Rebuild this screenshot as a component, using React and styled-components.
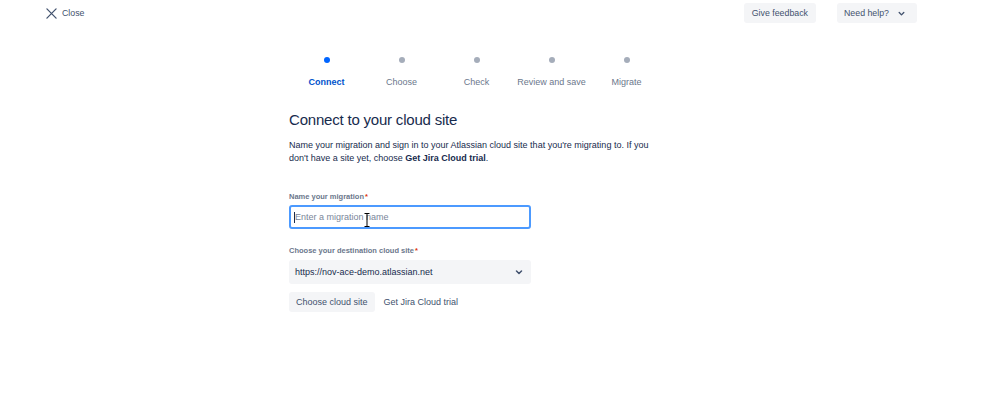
import React from "react";
import styled, { createGlobalStyle } from "styled-components";

const Global = createGlobalStyle`
  html, body { margin: 0; padding: 0; background: #ffffff; }
  body { font-family: "Liberation Sans", Arial, sans-serif; color: #172b4d; }
  * { box-sizing: border-box; }
`;

const Page = styled.div`
  width: 999px;
  height: 395px;
  background: #fff;
  overflow: hidden;
`;

const TopBar = styled.header`
  display: flex;
  align-items: center;
  justify-content: space-between;
  padding: 3px 82px 0 46px;
  height: 23px;
`;

const CloseButton = styled.button`
  display: flex;
  align-items: center;
  gap: 5px;
  border: 0;
  background: none;
  padding: 0;
  font-family: inherit;
  font-size: 8.8px;
  color: #42526e;
  height: 20px;
  cursor: pointer;
`;

const Actions = styled.div`
  display: flex;
  gap: 21px;
`;

const GreyButton = styled.button`
  display: flex;
  align-items: center;
  gap: ${(p) => (p.$gap ? p.$gap : 0)}px;
  height: 20px;
  padding: 0 ${(p) => (p.$pr ? p.$pr : 8)}px 0 ${(p) => (p.$pl ? p.$pl : 8)}px;
  border: 0;
  border-radius: 3px;
  background: #f4f5f7;
  color: #42526e;
  font-family: inherit;
  font-size: 8.8px;
  cursor: pointer;
`;

const Main = styled.main`
  width: 375px;
  margin-left: 289px;
  padding-top: 34px;
`;

const Steps = styled.ol`
  list-style: none;
  margin: 0;
  padding: 0;
  display: grid;
  grid-template-columns: repeat(5, 75px);
`;

const Step = styled.li`
  display: flex;
  flex-direction: column;
  align-items: center;
`;

const Dot = styled.span`
  width: 6px;
  height: 6px;
  border-radius: 50%;
  background: ${(p) => (p.$active ? "#0065ff" : "#a5adba")};
`;

const StepLabel = styled.span`
  margin-top: 14px;
  font-size: 9px;
  line-height: 11px;
  font-weight: ${(p) => (p.$active ? 700 : 400)};
  color: ${(p) => (p.$active ? "#0052cc" : "#6b778c")};
  white-space: nowrap;
`;

const Heading = styled.h1`
  margin: 22px 0 0;
  font-size: 15px;
  line-height: 20px;
  letter-spacing: -0.2px;
  font-weight: 400;
  color: #172b4d;
`;

const Intro = styled.p`
  margin: 9px 0 0;
  font-size: 9px;
  line-height: 13px;
  color: #172b4d;
  b { font-weight: 700; }
`;

const Field = styled.div`
  margin-top: ${(p) => p.$mt}px;
  width: 242px;
`;

const Label = styled.label`
  display: block;
  font-size: 7.5px;
  line-height: 10px;
  font-weight: 700;
  color: #6b778c;
  margin-bottom: ${(p) => (p.$mb != null ? p.$mb : 4)}px;
`;

const Req = styled.span`
  color: #de350b;
  margin-left: 1px;
`;

const InputWrap = styled.div`
  position: relative;
`;

const Input = styled.input`
  display: block;
  width: 100%;
  height: 24px;
  border: 2px solid #4c9aff;
  border-radius: 3px;
  padding: 0 0 0 4px;
  font-family: inherit;
  font-size: 9px;
  color: #172b4d;
  background: #fff;
  outline: none;
  &::placeholder { color: #7a869a; }
`;

const Caret = styled.span`
  position: absolute;
  left: 5px;
  top: 7px;
  width: 1px;
  height: 11px;
  background: #172b4d;
`;

const Pointer = styled.svg`
  position: absolute;
  left: 75px;
  top: 8px;
`;

const Select = styled.div`
  display: flex;
  align-items: center;
  justify-content: space-between;
  height: 24px;
  border-radius: 3px;
  background: #f4f5f7;
  padding: 0 6px 0 6px;
  font-size: 9px;
  color: #172b4d;
`;

const ButtonRow = styled.div`
  display: flex;
  gap: 2px;
  margin-top: 8px;
`;

const Btn = styled.button`
  height: 20px;
  padding: 0 7px;
  border: 0;
  border-radius: 3px;
  background: ${(p) => (p.$subtle ? "transparent" : "#f4f5f7")};
  color: #42526e;
  font-family: inherit;
  font-size: 9px;
  cursor: pointer;
`;

const Chevron = ({ size = 10 }) => (
  <svg width={size} height={size} viewBox="0 0 24 24" fill="none">
    <path d="M7 10l5 5 5-5" stroke="#42526e" strokeWidth="3" strokeLinecap="round" strokeLinejoin="round" />
  </svg>
);

const steps = ["Connect", "Choose", "Check", "Review and save", "Migrate"];

export default function App() {
  return (
    <Page>
      <Global />
      <TopBar>
        <CloseButton>
          <svg width="11" height="11" viewBox="0 0 12 12">
            <path d="M1 1l10 10M11 1L1 11" stroke="#42526e" strokeWidth="1.4" strokeLinecap="round" />
          </svg>
          Close
        </CloseButton>
        <Actions>
          <GreyButton>Give feedback</GreyButton>
          <GreyButton $pl={7} $pr={10} $gap={7}>
            Need help?
            <Chevron size={11} />
          </GreyButton>
        </Actions>
      </TopBar>
      <Main>
        <Steps>
          {steps.map((s, i) => (
            <Step key={s}>
              <Dot $active={i === 0} />
              <StepLabel $active={i === 0}>{s}</StepLabel>
            </Step>
          ))}
        </Steps>
        <Heading>Connect to your cloud site</Heading>
        <Intro>
          Name your migration and sign in to your Atlassian cloud site that you're migrating to. If you
          don't have a site yet, choose <b>Get Jira Cloud trial</b>.
        </Intro>
        <Field $mt={27}>
          <Label $mb={3}>
            Name your migration<Req>*</Req>
          </Label>
          <InputWrap>
            <Input placeholder="Enter a migration name" />
            <Caret />
            <Pointer width="6" height="14" viewBox="0 0 6 14">
              <path d="M0.5 0.5h5M3 0.5v13M0.5 13.5h5" stroke="#000" strokeWidth="1" fill="none" />
            </Pointer>
          </InputWrap>
        </Field>
        <Field $mt={17}>
          <Label>
            Choose your destination cloud site<Req>*</Req>
          </Label>
          <Select>
            https://nov-ace-demo.atlassian.net
            <Chevron size={12} />
          </Select>
        </Field>
        <ButtonRow>
          <Btn>Choose cloud site</Btn>
          <Btn $subtle>Get Jira Cloud trial</Btn>
        </ButtonRow>
      </Main>
    </Page>
  );
}
